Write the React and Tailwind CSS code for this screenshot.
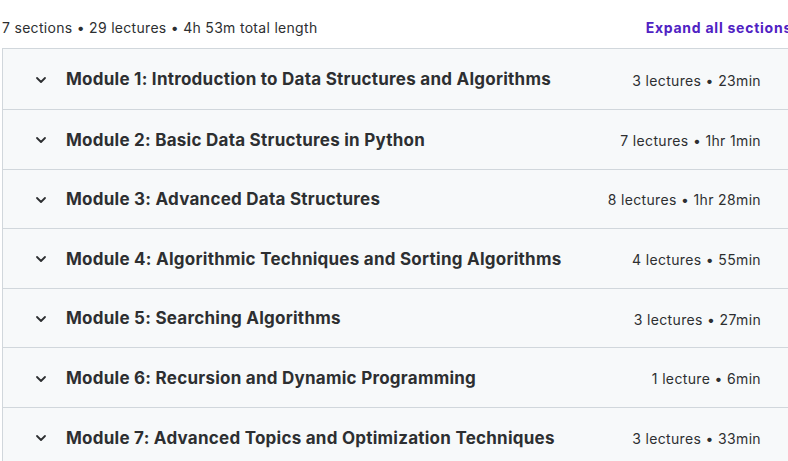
import React from "react";

const sections = [
  { title: "Module 1: Introduction to Data Structures and Algorithms", meta: "3 lectures • 23min" },
  { title: "Module 2: Basic Data Structures in Python", meta: "7 lectures • 1hr 1min" },
  { title: "Module 3: Advanced Data Structures", meta: "8 lectures • 1hr 28min" },
  { title: "Module 4: Algorithmic Techniques and Sorting Algorithms", meta: "4 lectures • 55min" },
  { title: "Module 5: Searching Algorithms", meta: "3 lectures • 27min" },
  { title: "Module 6: Recursion and Dynamic Programming", meta: "1 lecture • 6min" },
  { title: "Module 7: Advanced Topics and Optimization Techniques", meta: "3 lectures • 33min" },
];

const Chevron = () => (
  <svg width="12" height="12" viewBox="0 0 12 12" fill="none" className="shrink-0">
    <path d="M2 4l4 4 4-4" stroke="#2d2f31" strokeWidth="1.8" strokeLinecap="round" strokeLinejoin="round" />
  </svg>
);

export default function App() {
  return (
    <div
      className="w-[788px] h-[461px] overflow-hidden bg-white"
      style={{ fontFamily: "Inter, 'Noto Sans', sans-serif" }}
    >
      <div className="w-[792px] pl-[2px]">
        <div className="flex items-center justify-between h-[48.4px] pt-[6px]">
          <span className="text-[14px] text-[#2d2f31] tracking-[0.3px]">
            7 sections • 29 lectures • 4h 53m total length
          </span>
          <span className="text-[14px] font-bold text-[#5022c3] tracking-[0.75px]">Expand all sections</span>
        </div>
        <div className="border border-[#d1d7dc] border-r-0">
          {sections.map((s, i) => (
            <div
              key={i}
              className={`flex items-center h-[59.6px] bg-[#f7f9fa] pl-[32px] pr-[31px] pt-[2px] ${
                i > 0 ? "border-t border-[#d1d7dc]" : ""
              }`}
            >
              <Chevron />
              <span className="ml-[19px] text-[17px] font-bold text-[#2d2f31] tracking-[0.25px] flex-1">
                {s.title}
              </span>
              <span className="text-[14px] text-[#2d2f31] tracking-[0.35px]">{s.meta}</span>
            </div>
          ))}
        </div>
      </div>
    </div>
  );
}
